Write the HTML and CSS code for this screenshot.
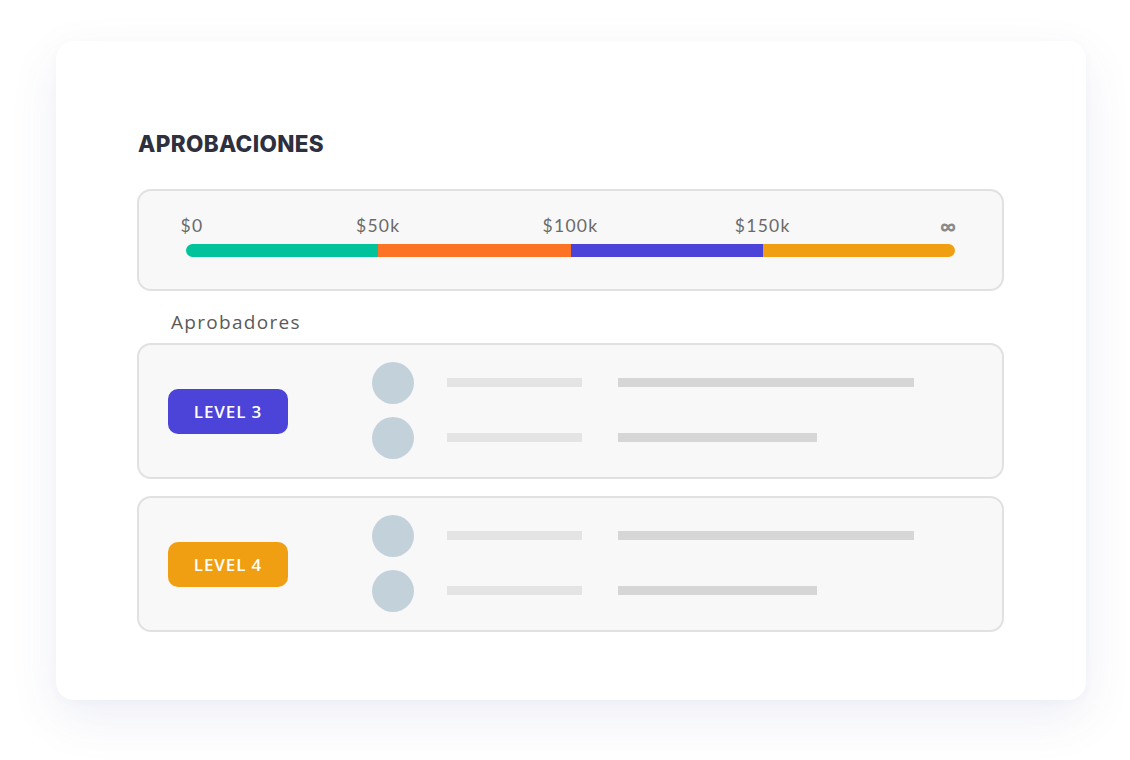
FILE: index.html
```html
<!DOCTYPE html>
<html lang="es">
<head>
<meta charset="utf-8">
<title>Aprobaciones</title>
<link rel="stylesheet" href="styles.css">
</head>
<body>
<main class="card">
  <h1 class="title">APROBACIONES</h1>

  <section class="range">
    <div class="range-labels">
      <span class="lbl lbl-first">$0</span>
      <span class="lbl">$50k</span>
      <span class="lbl">$100k</span>
      <span class="lbl">$150k</span>
      <span class="lbl lbl-inf">∞</span>
    </div>
    <div class="bar">
      <span class="seg seg-green"></span>
      <span class="seg seg-orange"></span>
      <span class="seg seg-purple"></span>
      <span class="seg seg-yellow"></span>
    </div>
  </section>

  <p class="subtitle">Aprobadores</p>

  <section class="level">
    <span class="badge badge-purple">LEVEL 3</span>
    <div class="approvers">
      <div class="row">
        <span class="avatar"></span>
        <span class="line line-short"></span>
        <span class="line line-long"></span>
      </div>
      <div class="row">
        <span class="avatar"></span>
        <span class="line line-short"></span>
        <span class="line line-mid"></span>
      </div>
    </div>
  </section>

  <section class="level">
    <span class="badge badge-yellow">LEVEL 4</span>
    <div class="approvers">
      <div class="row">
        <span class="avatar"></span>
        <span class="line line-short"></span>
        <span class="line line-long"></span>
      </div>
      <div class="row">
        <span class="avatar"></span>
        <span class="line line-short"></span>
        <span class="line line-mid"></span>
      </div>
    </div>
  </section>
</main>
</body>
</html>
```

FILE: styles.css
```css
* { box-sizing: border-box; }

html, body {
  margin: 0;
  padding: 0;
  background: #ffffff;
}

body {
  width: 1130px;
  height: 760px;
  overflow: hidden;
  font-family: "Open Sans", "Noto Sans", sans-serif;
}

.card {
  margin: 41px 0 0 56px;
  width: 1030px;
  height: 659px;
  background: #ffffff;
  border-radius: 18px;
  box-shadow: 0 18px 50px rgba(70, 80, 150, 0.09), 0 2px 10px rgba(70, 80, 150, 0.03);
  padding: 90px 82px 0 81px;
}

.title {
  margin: 0 0 0 1px;
  font-family: Inter, "Open Sans", sans-serif;
  font-weight: 800;
  font-size: 22.5px;
  line-height: 26px;
  color: #2e303d;
  letter-spacing: 0.35px;
}

.range {
  margin-top: 32px;
  height: 102px;
  background: #f8f8f8;
  border: 2px solid #e1e1e1;
  border-radius: 14px;
  padding: 25px 47px 0 47px;
}

.range-labels {
  display: grid;
  grid-template-columns: repeat(5, 64px);
  justify-content: space-between;
  margin: 0 -32px;
  height: 20px;
  font-family: Lato, "Open Sans", sans-serif;
  font-size: 17.5px;
  line-height: 20px;
  color: #6a6a6a;
  letter-spacing: 1.3px;
}

.lbl { text-align: center; white-space: nowrap; }
.lbl-first { padding-left: 12px; }
.lbl-inf {
  text-align: center;
  padding-right: 14px;
  font-weight: 900;
  font-size: 22px;
  color: #8a8a8a;
  line-height: 20px;
  letter-spacing: 0;
}

.bar {
  margin-top: 8px;
  height: 13px;
  display: flex;
  border-radius: 7px;
  overflow: hidden;
}

.seg { flex: 1; }
.seg-green { background: #00c39b; }
.seg-orange { background: #fc7325; }
.seg-purple { background: #4c43d8; }
.seg-yellow { background: #f19f12; }

.subtitle {
  margin: 19px 0 0 34px;
  font-family: "Open Sans", sans-serif;
  font-size: 19px;
  line-height: 24px;
  color: #5a5a5a;
  letter-spacing: 1.3px;
}

.level {
  margin-top: 9px;
  height: 136px;
  background: #f8f8f8;
  border: 2px solid #e1e1e1;
  border-radius: 14px;
  display: flex;
  align-items: center;
  padding-left: 29px;
}

.level + .level { margin-top: 17px; }

.badge {
  width: 120px;
  height: 45px;
  border-radius: 10px;
  display: flex;
  align-items: center;
  justify-content: center;
  color: #ffffff;
  font-family: "Open Sans", sans-serif;
  font-weight: 600;
  font-size: 17px;
  letter-spacing: 0.9px;
  padding-top: 1px;
}

.badge-purple { background: #4c43d8; }
.badge-yellow { background: #f19f12; }

.approvers {
  margin-left: 84px;
  display: flex;
  flex-direction: column;
  gap: 13px;
  padding-bottom: 2px;
}

.row {
  display: flex;
  align-items: center;
  height: 42px;
}

.avatar {
  width: 42px;
  height: 42px;
  border-radius: 50%;
  background: #c3d1da;
}

.line {
  height: 9px;
}

.line-short {
  margin-left: 33px;
  width: 135px;
  background: #e4e4e4;
}

.line-long {
  margin-left: 36px;
  width: 296px;
  background: #d6d6d6;
}

.line-mid {
  margin-left: 36px;
  width: 199px;
  background: #d6d6d6;
}
```
